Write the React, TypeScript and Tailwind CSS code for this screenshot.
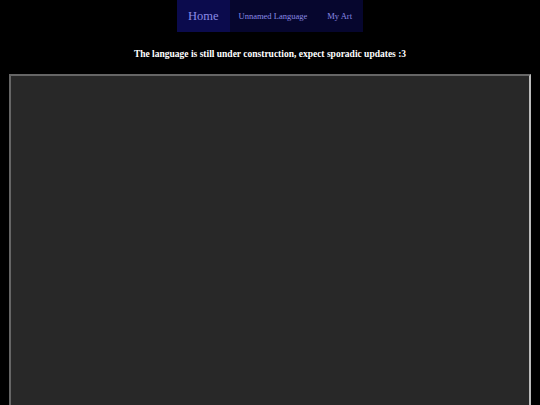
export default function App() {
  return (
    <div className="min-h-[405px] bg-black font-['Liberation_Serif',serif] flex flex-col items-center">
      <nav className="flex h-8 bg-[#06062e] text-[#8a8ae6]">
        <a className="flex items-center px-[11px] bg-[#0b0b4d] text-[12.5px]">Home</a>
        <a className="flex items-center px-[9px] text-[8.5px]">Unnamed Language</a>
        <a className="flex items-center px-[11px] text-[8.5px]">My Art</a>
      </nav>
      <p className="mt-[16px] text-white font-bold text-[9.5px] leading-[12px]">
        The language is still under construction, expect sporadic updates :3
      </p>
      <div className="mt-[14px] w-[522px] h-[340px] bg-[#282828] border-2 border-t-[#666] border-l-[#666] border-r-[#bbb] border-b-[#bbb]" />
    </div>
  );
}
